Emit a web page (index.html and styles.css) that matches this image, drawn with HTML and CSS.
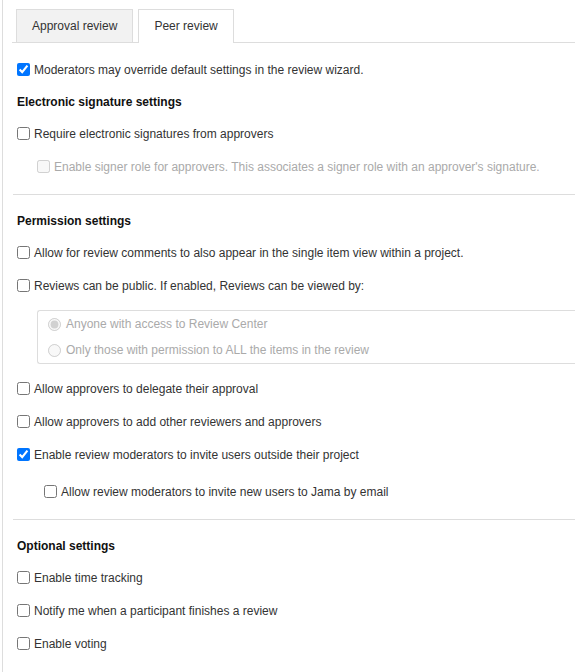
FILE: index.html
```html
<!DOCTYPE html>
<html>
<head>
<meta charset="utf-8">
<link rel="stylesheet" href="styles.css">
</head>
<body>
<div class="frame">
  <div class="tabs">
    <div class="tab">Approval review</div>
    <div class="tab active">Peer review</div>
  </div>
  <div class="panel">
    <label class="row first"><input type="checkbox" checked><span>Moderators may override default settings in the review wizard.</span></label>
    <div class="heading">Electronic signature settings</div>
    <label class="row"><input type="checkbox"><span>Require electronic signatures from approvers</span></label>
    <label class="row sub disabled"><input type="checkbox" disabled><span>Enable signer role for approvers. This associates a signer role with an approver's signature.</span></label>
  </div>
  <hr class="divider">
  <div class="panel">
    <div class="heading">Permission settings</div>
    <label class="row"><input type="checkbox"><span>Allow for review comments to also appear in the single item view within a project.</span></label>
    <label class="row"><input type="checkbox"><span>Reviews can be public. If enabled, Reviews can be viewed by:</span></label>
    <div class="radiobox">
      <label class="radio disabled"><input type="radio" name="v" checked disabled><span>Anyone with access to Review Center</span></label>
      <label class="radio disabled"><input type="radio" name="v" disabled><span>Only those with permission to ALL the items in the review</span></label>
    </div>
    <label class="row after-box"><input type="checkbox"><span>Allow approvers to delegate their approval</span></label>
    <label class="row"><input type="checkbox"><span>Allow approvers to add other reviewers and approvers</span></label>
    <label class="row"><input type="checkbox" checked><span>Enable review moderators to invite users outside their project</span></label>
    <label class="row sub2"><input type="checkbox"><span>Allow review moderators to invite new users to Jama by email</span></label>
  </div>
  <hr class="divider">
  <div class="panel">
    <div class="heading">Optional settings</div>
    <label class="row"><input type="checkbox"><span>Enable time tracking</span></label>
    <label class="row"><input type="checkbox"><span>Notify me when a participant finishes a review</span></label>
    <label class="row"><input type="checkbox"><span>Enable voting</span></label>
  </div>
</div>
</body>
</html>
```
FILE: styles.css
```css
html, body {
  margin: 0;
  padding: 0;
  background: #fff;
}
body {
  font-family: "Liberation Sans", Arial, sans-serif;
  font-size: 12px;
  color: #333;
}
.frame {
  margin-left: 2px;
  border-left: 1px solid #ddd;
  min-height: 672px;
  padding-left: 9px;
  box-sizing: border-box;
  overflow: hidden;
}
.tabs {
  display: flex;
  align-items: flex-end;
  gap: 5px;
  padding-top: 9px;
  padding-left: 4px;
  border-bottom: 1px solid #ddd;
}
.tab {
  height: 33px;
  box-sizing: border-box;
  padding: 0 15px;
  display: flex;
  align-items: center;
  border: 1px solid #ddd;
  border-bottom: none;
  background: #f2f2f2;
  color: #333;
}
.tab.active {
  background: #fff;
  height: 34px;
  margin-bottom: -1px;
  padding: 0 15px 1px;
}
.panel {
  padding-left: 5px;
}
.row {
  display: flex;
  align-items: center;
  height: 33px;
  gap: 4px;
  white-space: nowrap;
}
.row.first {
  margin-top: 10px;
}
.row input, .radio input {
  margin: 0;
  width: 13px;
  height: 13px;
}
.heading {
  height: 31px;
  display: flex;
  align-items: center;
  font-weight: bold;
  color: #111;
}
.sub {
  padding-left: 20px;
}
.sub2 {
  padding-left: 27px;
  margin-top: 4px;
}
.disabled {
  color: #aaa;
}
.divider {
  border: none;
  border-top: 1px solid #ddd;
  margin: 11px 0 10px 1px;
  height: 0;
}
.radiobox {
  margin: 8px 0 0 20px;
  border: 1px solid #ddd;
  border-right: none;
  border-radius: 3px 0 0 3px;
  padding-left: 10px;
}
.radio {
  display: flex;
  align-items: center;
  height: 26px;
  gap: 5px;
  white-space: nowrap;
}
.after-box {
  margin-top: 8px;
}
```
